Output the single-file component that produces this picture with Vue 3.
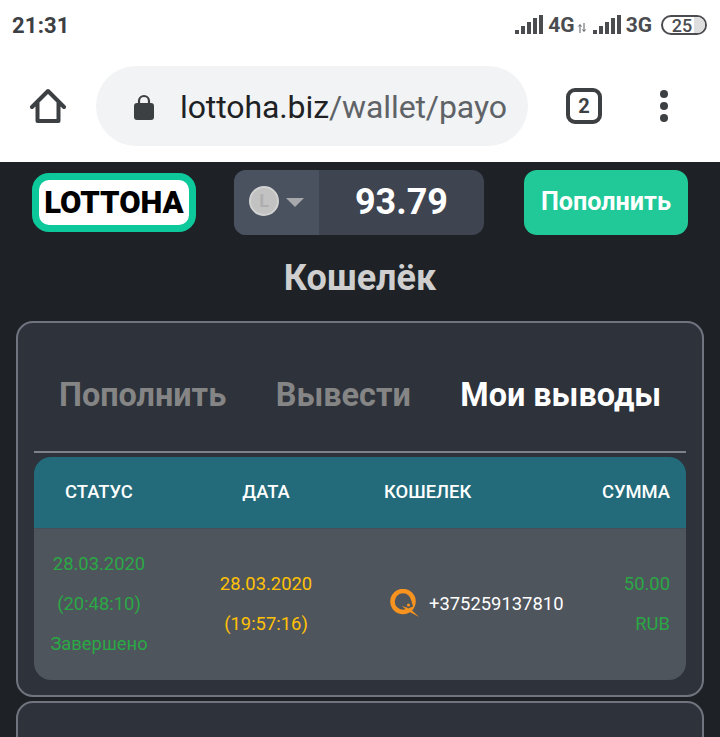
<script setup>
const row = { done: ['28.03.2020', '(20:48:10)', 'Завершено'], date: ['28.03.2020', '(19:57:16)'], phone: '+375259137810', sum: ['50.00', 'RUB'] }
const bars = [[0, 15, 4], [6, 11, 8], [12, 7, 12], [18, 3, 16], [24, 0, 19]]
</script>

<template>
  <div class="page">
    <header class="chrome">
      <div class="status">
        <span class="time">21:31</span>
        <div class="indicators">
          <svg class="signal" width="28" height="19" viewBox="0 0 28 19"><rect v-for="b in bars" :key="b[0]" :x="b[0]" :y="b[1]" width="4" :height="b[2]" fill="#4a4c50" /></svg>
          <span class="net">4G</span>
          <svg class="arrows" width="8" height="10" viewBox="0 0 8 10"><path d="M2 10V2M0.5 3.5 2 1.5 3.5 3.5M6 0v8M4.5 6.5 6 8.5 7.5 6.5" fill="none" stroke="#5a5c60" stroke-width="1" /></svg>
          <svg class="signal two" width="28" height="19" viewBox="0 0 28 19"><rect v-for="b in bars" :key="b[0]" :x="b[0]" :y="b[1]" width="4" :height="b[2]" fill="#4a4c50" /></svg>
          <span class="net">3G</span>
          <div class="battery"><i class="battery-empty"></i><span>25</span></div>
        </div>
      </div>
      <div class="toolbar">
        <svg class="home" width="36" height="36" viewBox="0 0 36 36"><path d="M2 19 18 3 34 19M7.500 15V33H28.500V15" fill="none" stroke="#3c4043" stroke-width="4" stroke-linecap="round" stroke-linejoin="round" /></svg>
        <div class="address">
          <svg class="lock" width="20" height="26" viewBox="0 0 20 26"><path d="M5 10V7a5 5 0 0 1 10 0v3" fill="none" stroke="#3c4043" stroke-width="2.200" /><rect x="0" y="9" width="20" height="17" rx="3" fill="#3c4043" /></svg>
          <div class="url"><span class="host">lottoha.biz</span>/wallet/payo</div>
        </div>
        <div class="tabs-count">2</div>
        <div class="dots"><i></i><i></i><i></i></div>
      </div>
    </header>

    <main class="site">
      <div class="topbar">
        <div class="logo">LOTTOHA</div>
        <div class="balance">
          <div class="currency">
            <div class="coin">L</div>
            <i class="caret"></i>
          </div>
          <div class="amount">93.79</div>
        </div>
        <button class="deposit">Пополнить</button>
      </div>

      <h1 class="title">Кошелёк</h1>

      <section class="card">
        <nav class="tabs">
          <span class="tab">Пополнить</span>
          <span class="tab">Вывести</span>
          <span class="tab active">Мои выводы</span>
        </nav>
        <div class="table">
          <div class="head">
            <span class="center">СТАТУС</span>
            <span class="center">ДАТА</span>
            <span class="wallet-head">КОШЕЛЕК</span>
            <span class="end">СУММА</span>
          </div>
          <div class="body">
            <div class="cell center green"><p v-for="t in row.done" :key="t">{{ t }}</p></div>
            <div class="cell center yellow"><p v-for="t in row.date" :key="t">{{ t }}</p></div>
            <div class="wallet">
              <svg width="30" height="29" viewBox="0 0 30 29"><circle cx="14" cy="12.500" r="10.500" fill="none" stroke="#f7931e" stroke-width="4.500" /><path d="M13 17 18 21.500 30 28 21 19.500Z" fill="#f7931e" /><path d="M17 15.500l5-5 2 7-5 2z" fill="#4f555d" /><circle cx="19.500" cy="16" r="1.600" fill="#f7931e" /></svg>
              <span>{{ row.phone }}</span>
            </div>
            <div class="cell end green"><p v-for="t in row.sum" :key="t">{{ t }}</p></div>
          </div>
        </div>
      </section>
      <section class="card next"></section>
    </main>
  </div>
</template>

<style>
html, body { margin: 0; background: #1e2227; }
</style>

<style scoped>
.page { height: 737px; overflow: hidden; font-family: Roboto, "Liberation Sans", sans-serif; background: #1e2227; }
.chrome { height: 162px; background: #fff; display: flex; flex-direction: column; }
.status { height: 50px; padding: 0 12px; display: flex; align-items: center; justify-content: space-between; box-sizing: border-box; }
.time { font-size: 22px; font-weight: 700; color: #3c4043; letter-spacing: 0.2px; }
.indicators { display: flex; align-items: center; margin-right: 1px; }
.signal { margin-top: -2px; }
.signal.two { margin-left: 7px; }
.net { font-size: 21px; font-weight: 700; color: #4a4c50; margin-left: 5px; }
.arrows { margin: 6px 0 0 3px; }
.battery { position: relative; margin-left: 9px; width: 46px; height: 20px; box-sizing: border-box; border: 2px solid #4a4c50; border-radius: 10px; display: flex; align-items: center; justify-content: center; overflow: hidden; font-size: 18px; font-weight: 500; color: #4a4c50; }
.battery span { position: relative; margin-left: -4px; }
.battery-empty { position: absolute; right: 0; top: 0; bottom: 0; width: 11px; background: #dedede; }
.toolbar { display: flex; align-items: center; padding: 16px 0 0 30px; }
.home { flex: none; }
.address { margin-left: 30px; width: 432px; height: 80px; box-sizing: border-box; border-radius: 40px; background: #f1f3f4; display: flex; align-items: center; padding-left: 38px; }
.lock { flex: none; margin-top: 1px; }
.url { margin-left: 27px; margin-top: 1px; font-size: 32px; letter-spacing: -0.1px; color: #5f6368; white-space: nowrap; }
.host { color: #202124; margin-left: -1px; }
.tabs-count { margin-left: 38px; width: 36px; height: 36px; box-sizing: border-box; border: 4px solid #3c4043; border-radius: 9px; display: flex; align-items: center; justify-content: center; font-size: 20px; font-weight: 700; color: #3c4043; }
.dots { margin-left: 58px; display: flex; flex-direction: column; gap: 4px; }
.dots i { display: block; width: 8px; height: 8px; border-radius: 50%; background: #3c4043; }
.site { padding: 8px 16px 0; }
.topbar { display: flex; align-items: flex-start; padding-left: 16px; height: 65px; }
.logo { margin-top: 3px; width: 164px; height: 59px; box-sizing: border-box; border: 7px solid #0dc89a; border-radius: 17px; background: #fff; color: #000; font-size: 31px; font-weight: 900; display: flex; align-items: center; justify-content: center; letter-spacing: 0; }
.balance { margin-left: 38px; width: 250px; height: 65px; border-radius: 12px; overflow: hidden; display: flex; background: #3e4450; }
.currency { width: 85px; background: #4a5260; display: flex; align-items: center; padding: 0 0 4px 15px; box-sizing: border-box; }
.coin { width: 30px; height: 30px; box-sizing: border-box; border: 2px solid #d2d2d2; border-radius: 50%; background: #c2c2c2; color: #aeaeae; display: flex; align-items: center; justify-content: center; font-size: 18px; font-weight: 700; }
.caret { margin-left: 7px; margin-top: 3px; border-left: 9px solid transparent; border-right: 9px solid transparent; border-top: 9px solid #a6a8ac; }
.amount { flex: 1; display: flex; align-items: center; justify-content: center; color: #fff; font-size: 36px; font-weight: 700; padding-bottom: 1px; }
.deposit { margin-left: 40px; width: 164px; height: 65px; border: 0; border-radius: 13px; background: #20c997; color: #fff; font-family: inherit; font-size: 25.200px; font-weight: 700; padding: 0 0 2px; }
.title { margin: 21px 0 0; height: 45px; line-height: 45px; text-align: center; font-size: 36px; font-weight: 700; color: #cfcfcf; }
.card { margin-top: 20px; height: 376px; box-sizing: border-box; border: 2px solid #70747e; border-radius: 17px; background: #2d323b; padding: 0 16px; }
.tabs { height: 130px; box-sizing: border-box; border-bottom: 2px solid #7e828c; display: flex; align-items: flex-start; padding: 53px 0 0 25px; }
.tab { font-size: 32.400px; font-weight: 700; color: #858585; margin-right: 49.500px; white-space: nowrap; }
.tab.active { color: #fff; margin-right: 0; }
.table { margin-top: 4px; border-radius: 17px; overflow: hidden; }
.head, .body { display: grid; grid-template-columns: 130px 204px minmax(0, 1fr) 130px; }
.head { height: 71px; background: #236b7b; align-items: center; color: #fff; font-size: 18.400px; font-weight: 500; padding-bottom: 2px; box-sizing: border-box; }
.body { height: 152px; background: #4f555d; border-top: 1px solid #47505a; box-sizing: border-box; align-items: center; font-size: 18.400px; padding-bottom: 2px; }
.center { text-align: center; }
.end { text-align: right; padding-right: 16px; }
.wallet-head { padding-left: 16px; }
.cell p { margin: 0; height: 40px; line-height: 40px; }
.green { color: #2aa845; }
.yellow { color: #ffc107; }
.wallet { display: flex; align-items: center; gap: 10px; padding-left: 21px; color: #fff; white-space: nowrap; }
.wallet svg { flex: none; }
.next { margin-top: 4px; }
</style>
